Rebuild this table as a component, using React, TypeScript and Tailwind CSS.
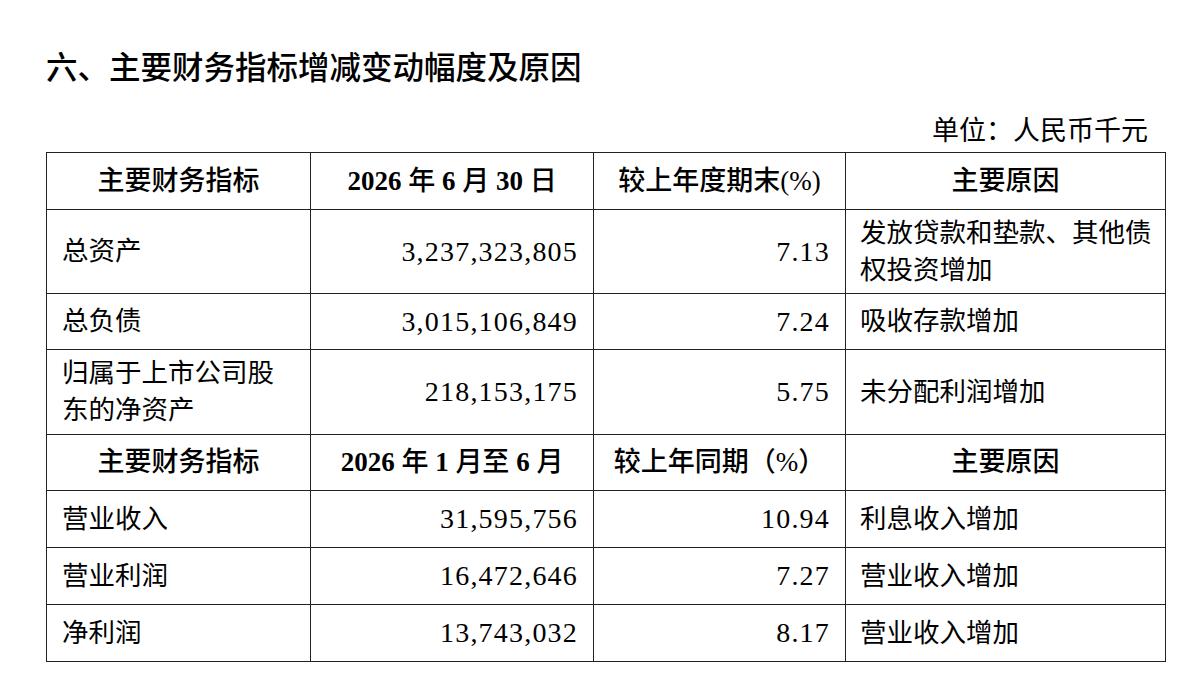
const cjk = 'font-["Liberation_Serif","Noto_Sans_CJK_SC",serif]';
const num = 'font-["Liberation_Serif",serif] text-[28px] tracking-[1.2px]';
const cell = 'border-[1.5px] border-[#222] align-middle';

type Row = { name: React.ReactNode; value: string; pct: string; reason: React.ReactNode; h: string };

const part1: Row[] = [
  {
    name: '总资产',
    value: '3,237,323,805',
    pct: '7.13',
    reason: (
      <>
        发放贷款和垫款、其他债
        <br />
        权投资增加
      </>
    ),
    h: 'h-[84px]',
  },
  { name: '总负债', value: '3,015,106,849', pct: '7.24', reason: '吸收存款增加', h: 'h-[56px]' },
  {
    name: (
      <>
        归属于上市公司股
        <br />
        东的净资产
      </>
    ),
    value: '218,153,175',
    pct: '5.75',
    reason: '未分配利润增加',
    h: 'h-[85px]',
  },
];

const part2: Row[] = [
  { name: '营业收入', value: '31,595,756', pct: '10.94', reason: '利息收入增加', h: 'h-[57px]' },
  { name: '营业利润', value: '16,472,646', pct: '7.27', reason: '营业收入增加', h: 'h-[57px]' },
  { name: '净利润', value: '13,743,032', pct: '8.17', reason: '营业收入增加', h: 'h-[57px]' },
];

// 헤더의 숫자만 굵게
function Digits({ text }: { text: string }) {
  return (
    <>
      {text.split(/(\d+)/).map((part, index) =>
        /^\d+$/.test(part) ? (
          <span key={index} className="font-semibold">
            {part}
          </span>
        ) : (
          <span key={index}>{part}</span>
        ),
      )}
    </>
  );
}

function HeadRow(props: { date: string; pct: string; h: string }) {
  return (
    <tr className={`${props.h} font-medium text-[27px] text-center`}>
      <td className={cell}>主要财务指标</td>
      <td className={cell}>
        <Digits text={props.date} />
      </td>
      <td className={cell}>{props.pct}</td>
      <td className={cell}>主要原因</td>
    </tr>
  );
}

function DataRow({ row }: { row: Row }) {
  return (
    <tr className={`${row.h} text-[26.5px] leading-[37px]`}>
      <td className={`${cell} pl-[15px] pr-[8px]`}>{row.name}</td>
      <td className={`${cell} pr-[15px] text-right`}>
        <span className={num}>{row.value}</span>
      </td>
      <td className={`${cell} pr-[15px] text-right`}>
        <span className={num}>{row.pct}</span>
      </td>
      <td className={`${cell} pl-[14px] pr-[8px]`}>{row.reason}</td>
    </tr>
  );
}

export default function App() {
  return (
    <div className={`w-[1200px] h-[688px] bg-white text-black overflow-hidden pl-[46px] pr-[35px] ${cjk}`}>
      {/* title */}
      <div className='pt-[45px] h-[85px] text-[31.5px] leading-[40px] font-medium font-["Noto_Sans_CJK_SC",sans-serif]'>
        六、主要财务指标增减变动幅度及原因
      </div>
      <div className="mt-[28px] pr-[17px] text-right text-[27px] leading-[36px]">单位：人民币千元</div>
      <table className="mt-[3px] w-[1119px] table-fixed border-collapse">
        <colgroup>
          <col className="w-[264px]" />
          <col className="w-[283px]" />
          <col className="w-[252px]" />
          <col className="w-[320px]" />
        </colgroup>
        <tbody>
          <HeadRow date="2026 年 6 月 30 日" pct="较上年度期末(%)" h="h-[57px]" />
          {part1.map((row, index) => (
            <DataRow key={'a' + index} row={row} />
          ))}
          <HeadRow date="2026 年 1 月至 6 月" pct="较上年同期（%）" h="h-[56px]" />
          {part2.map((row, index) => (
            <DataRow key={'b' + index} row={row} />
          ))}
        </tbody>
      </table>
    </div>
  );
}
